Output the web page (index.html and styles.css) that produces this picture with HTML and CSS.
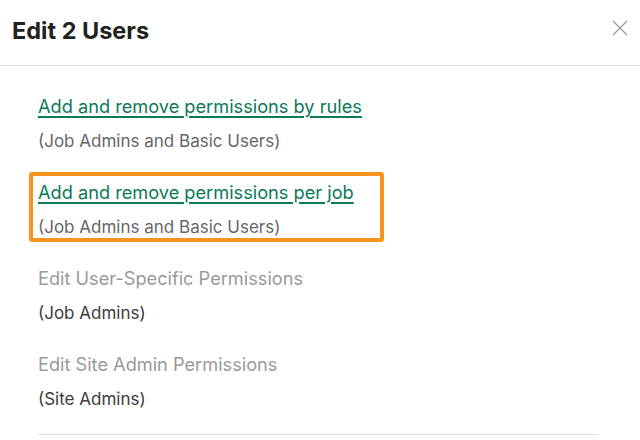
FILE: index.html
```html
<!DOCTYPE html>
<html lang="en">
<head>
<meta charset="utf-8">
<title>Edit 2 Users</title>
<link rel="stylesheet" href="styles.css">
</head>
<body>
<div class="modal">
  <header class="modal-header">
    <h1 class="modal-title">Edit 2 Users</h1>
    <button class="close" aria-label="Close">
      <svg width="16" height="16" viewBox="0 0 16 16"><path d="M1 1L15 15M15 1L1 15" stroke="#9b9b9b" stroke-width="1.4" fill="none"/></svg>
    </button>
  </header>
  <div class="modal-body">
    <div class="option">
      <a class="option-link" href="#">Add and remove permissions by rules</a>
      <div class="option-sub">(Job Admins and Basic Users)</div>
    </div>
    <div class="option highlighted">
      <a class="option-link" href="#">Add and remove permissions per job</a>
      <div class="option-sub">(Job Admins and Basic Users)</div>
    </div>
    <div class="option">
      <div class="option-disabled">Edit User-Specific Permissions</div>
      <div class="option-sub dark">(Job Admins)</div>
    </div>
    <div class="option">
      <div class="option-disabled">Edit Site Admin Permissions</div>
      <div class="option-sub dark">(Site Admins)</div>
    </div>
    <div class="divider"></div>
  </div>
</div>
</body>
</html>
```
FILE: styles.css
```css
html, body {
  margin: 0;
  padding: 0;
  background: #fff;
}
body {
  font-family: Inter, "Noto Sans", "Liberation Sans", sans-serif;
  color: #222;
}
.modal {
  width: 640px;
  height: 440px;
  overflow: hidden;
}
.modal-header {
  display: flex;
  align-items: flex-start;
  justify-content: space-between;
  height: 66px;
  box-sizing: border-box;
  border-bottom: 1px solid #e0e0e0;
  padding: 16px 12px 0 12px;
}
.modal-title {
  margin: 0;
  font-size: 23.5px;
  font-weight: 700;
  line-height: 30px;
  color: #222;
  letter-spacing: 0;
}
.close {
  border: 0;
  background: none;
  padding: 0;
  margin: 4px 0 0 0;
  width: 16px;
  height: 16px;
  cursor: pointer;
}
.close svg { display: block; }
.modal-body {
  padding: 24px 42px 0 38px;
}
.option {
  display: flex;
  flex-direction: column;
  align-items: flex-start;
  margin-bottom: 19px;
  position: relative;
}
.option-link, .option-disabled {
  font-size: 18.2px;
  line-height: 32px;
}
.option-link {
  color: #0b7a59;
  text-decoration: underline;
  text-underline-offset: 3px;
  text-decoration-thickness: 1.5px;
}
.option-disabled {
  color: #9a9a9a;
}
.option-sub {
  font-size: 17px;
  line-height: 32px;
  padding-top: 3px;
  color: #666;
}
.option-sub.dark {
  color: #3c3c3c;
}
.highlighted::after {
  content: "";
  position: absolute;
  left: -9px;
  top: -4px;
  width: 355px;
  height: 70px;
  box-sizing: border-box;
  border: 4px solid #f7941d;
  border-radius: 3px;
}
.divider {
  height: 1px;
  background: #dedede;
  margin-top: 17px;
}
```
